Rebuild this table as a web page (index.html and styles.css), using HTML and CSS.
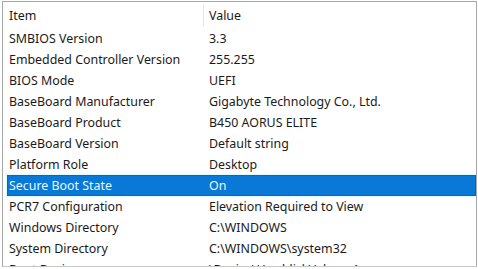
FILE: index.html
```html
<!DOCTYPE html>
<html>
<head>
<meta charset="utf-8">
<link rel="stylesheet" href="styles.css">
</head>
<body>
<div class="list">
  <div class="header">
    <div class="col-item hcell">Item</div>
    <div class="col-value hcell">Value</div>
  </div>
  <div class="rows">
    <div class="row"><div class="col-item">SMBIOS Version</div><div class="col-value">3.3</div></div>
    <div class="row"><div class="col-item">Embedded Controller Version</div><div class="col-value">255.255</div></div>
    <div class="row"><div class="col-item">BIOS Mode</div><div class="col-value">UEFI</div></div>
    <div class="row"><div class="col-item">BaseBoard Manufacturer</div><div class="col-value">Gigabyte Technology Co., Ltd.</div></div>
    <div class="row"><div class="col-item">BaseBoard Product</div><div class="col-value">B450 AORUS ELITE</div></div>
    <div class="row"><div class="col-item">BaseBoard Version</div><div class="col-value">Default string</div></div>
    <div class="row"><div class="col-item">Platform Role</div><div class="col-value">Desktop</div></div>
    <div class="row selected"><div class="col-item">Secure Boot State</div><div class="col-value">On</div></div>
    <div class="row"><div class="col-item">PCR7 Configuration</div><div class="col-value">Elevation Required to View</div></div>
    <div class="row"><div class="col-item">Windows Directory</div><div class="col-value">C:\WINDOWS</div></div>
    <div class="row"><div class="col-item">System Directory</div><div class="col-value">C:\WINDOWS\system32</div></div>
    <div class="row"><div class="col-item">Boot Device</div><div class="col-value">\Device\HarddiskVolume1</div></div>
  </div>
</div>
</body>
</html>
```
FILE: styles.css
```css
html, body {
  margin: 0;
  padding: 0;
  background: #ffffff;
}
body {
  padding: 1px 1px 0 2px;
  width: 478px;
  height: 269px;
  box-sizing: border-box;
  overflow: hidden;
  font-family: "Noto Sans", "Open Sans", sans-serif;
  font-size: 12.4px;
  color: #1a1a1a;
}
.list {
  width: 475px;
  height: 266px;
  box-sizing: border-box;
  border: 1px solid #a7a7a7;
  border-bottom-color: #c8c8c8;
  overflow: hidden;
  display: flex;
  flex-direction: column;
}
.header {
  display: flex;
  height: 26px;
  flex: none;
  align-items: center;
}
.hcell {
  height: 22px;
  display: flex;
  align-items: center;
}
.header .col-item {
  border-right: 1px solid #e5e5e5;
  margin-left: 4px;
}
.rows {
  display: flex;
  flex-direction: column;
}
.row {
  display: flex;
  height: 21px;
  align-items: center;
  flex: none;
  margin-left: 4px;
}
.col-item {
  width: 194px;
  padding-left: 2px;
  white-space: nowrap;
}
.row .col-item {
  width: 195px;
}
.col-value {
  padding-left: 5px;
  white-space: nowrap;
}
.row.selected {
  background: #0a78d7;
  color: #e8fbff;
  box-shadow: inset 0 0 0 1px #4048c8;
  outline: 1px solid #e2fbfd;
}
```
